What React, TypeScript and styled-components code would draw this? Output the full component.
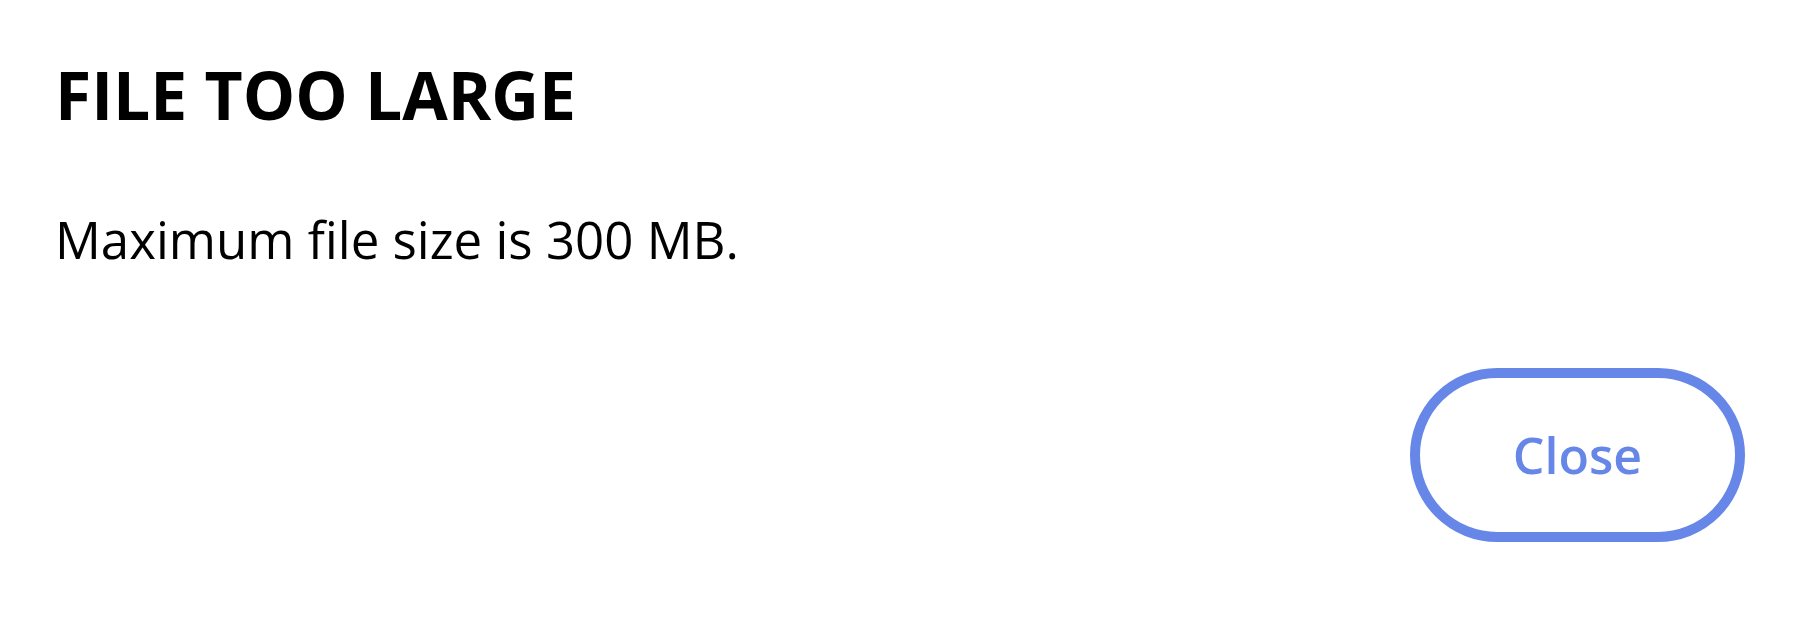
import React from "react";
import styled, { createGlobalStyle } from "styled-components";

const GlobalStyle = createGlobalStyle`
  html, body {
    margin: 0;
    padding: 0;
    background: #ffffff;
  }
  body {
    font-family: "Open Sans", "Noto Sans", "Liberation Sans", sans-serif;
    color: #000000;
  }
`;

const ACCENT = "#6687e8";

const Dialog = styled.div`
  display: flex;
  flex-direction: column;
  box-sizing: border-box;
  width: 1818px;
  height: 634px;
  padding: 61px 73px 0 55px;
`;

const Title = styled.h1`
  margin: 0;
  font-size: 66px;
  line-height: 66px;
  font-weight: 700;
  letter-spacing: 0;
`;

const Message = styled.p`
  margin: 87px 0 0;
  font-size: 51px;
  line-height: 51px;
  font-weight: 400;
`;

const Footer = styled.div`
  display: flex;
  justify-content: flex-end;
  margin-top: 103px;
`;

const CloseButton = styled.button`
  box-sizing: border-box;
  width: 335px;
  height: 174px;
  border: 10px solid ${ACCENT};
  border-radius: 87px;
  background: #ffffff;
  color: ${ACCENT};
  font-family: "Open Sans", "Noto Sans", sans-serif;
  font-size: 50px;
  font-weight: 600;
  cursor: pointer;
  padding: 0;
`;

const App = () => {
  return (
    <>
      <GlobalStyle />
      <Dialog>
        <Title>FILE TOO LARGE</Title>
        <Message>Maximum file size is 300 MB.</Message>
        <Footer>
          <CloseButton type="button">Close</CloseButton>
        </Footer>
      </Dialog>
    </>
  );
};

export default App;
